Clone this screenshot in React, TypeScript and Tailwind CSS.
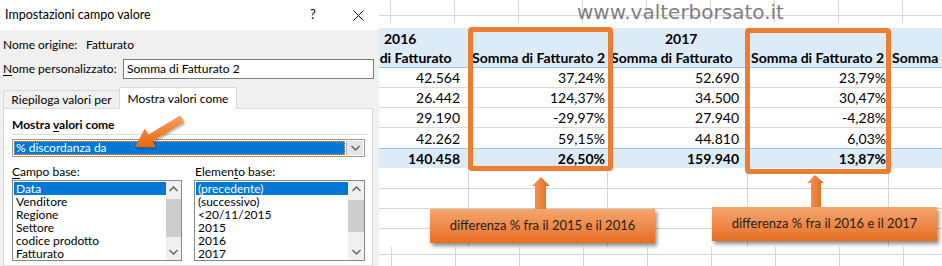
import React from "react";

const dlg = "font-['Lato',sans-serif]";
const xl = "font-['Lato',sans-serif]";

function Chev({ up }: { up?: boolean }) {
  return (
    <svg width="9" height="6" viewBox="0 0 9 6">
      <polyline
        points={up ? "0.5,5 4.5,1 8.5,5" : "0.5,1 4.5,5 8.5,1"}
        fill="none"
        stroke="#606060"
        strokeWidth="1.4"
      />
    </svg>
  );
}

function Items({ items }: { items: string[] }) {
  return (
    <div className="flex-1 flex flex-col pt-[1px] overflow-hidden">
      {items.map((t, i) => (
        <div
          key={t}
          className={
            i === 0
              ? "h-[13px] leading-[13px] pl-[2px] bg-[#0078d7] text-white whitespace-nowrap"
              : "h-[13px] leading-[13px] pl-[2px] text-black whitespace-nowrap"
          }
        >
          {t}
        </div>
      ))}
    </div>
  );
}

function Dialog() {
  return (
    <div className={`${dlg} w-[379px] shrink-0 h-full flex flex-col bg-[#f0f0f0] text-[12px] text-black`}>
      <div className="h-[30px] bg-white flex items-center pl-[5px]">
        <span className="flex-1 text-[12.5px]">Impostazioni campo valore</span>
        <span className="w-[20px] text-center text-[13px]">?</span>
        <span className="w-[20px] ml-[25px] mr-[11px] flex items-center justify-center">
          <svg width="11" height="11" viewBox="0 0 11 11">
            <line x1="0.5" y1="0.5" x2="10.5" y2="10.5" stroke="#111" strokeWidth="1" />
            <line x1="10.5" y1="0.5" x2="0.5" y2="10.5" stroke="#111" strokeWidth="1" />
          </svg>
        </span>
      </div>
      <div className="flex-1 flex flex-col pl-[3px] overflow-hidden">
        <div className="mt-[5px] h-[20px] flex items-center">
          <span className="w-[83px]">Nome origine:</span>
          <span>Fatturato</span>
        </div>
        <div className="mt-[4px] h-[20px] flex items-center">
          <span className="w-[120px] whitespace-nowrap">
            <span className="underline underline-offset-[2px]">N</span>ome personalizzato:
          </span>
          <div className="w-[251px] h-[20px] border border-[#7a7a7a] bg-white pl-[3px] flex items-center">
            Somma di Fatturato 2
          </div>
        </div>
        <div className="mt-[7px] h-[22px] flex items-end relative z-10">
          <div className="w-[116px] h-[18px] border-t border-l border-[#d9d9d9] flex items-center justify-center whitespace-nowrap">
            Riepiloga valori per
          </div>
          <div className="w-[118px] h-[22px] bg-white border border-b-0 border-[#d9d9d9] mb-[-1px] flex items-center justify-center whitespace-nowrap">
            Mostra valori come
          </div>
        </div>
        <div className="w-[370px] flex-1 bg-white border border-[#d9d9d9] pl-[8px] flex flex-col">
          <div className="mt-[8px] h-[16px] leading-[16px] font-bold">
            Mostra <span className="underline underline-offset-[2px]">v</span>alori come
          </div>
          <div className="mt-[1px] w-[356px] h-[1px] bg-[#dcdcdc]" />
          <div className="mt-[4px] w-[353px] h-[18px] border border-[#9a9a9a] bg-white flex p-[1px]">
            <div className="flex-1 bg-[#0078d7] text-white border border-dotted border-[#e8a060] leading-[12px] pl-[1px]">
              % discordanza da
            </div>
            <div className="w-[17px] ml-[1px] bg-[#e5e5e5] border-l border-[#bcbcbc] flex items-center justify-center">
              <Chev />
            </div>
          </div>
          <div className="mt-[7px] h-[16px] leading-[16px] flex">
            <span className="w-[183px]">
              <span className="underline underline-offset-[2px]">C</span>ampo base:
            </span>
            <span>
              Elemen<span className="underline underline-offset-[2px]">t</span>o base:
            </span>
          </div>
          <div className="flex gap-[12px]">
            <div className="w-[170px] h-[81px] border border-[#828790] bg-white flex pl-[1px]">
              <Items items={["Data", "Venditore", "Regione", "Settore", "codice prodotto", "Fatturato"]} />
              <div className="w-[15px] h-full bg-[#f0f0f0] flex flex-col">
                <div className="h-[16px] flex items-center justify-center"><Chev up /></div>
                <div className="flex-1">
                  <div className="mt-[2px] h-[38px] bg-[#cdcdcd]" />
                </div>
                <div className="h-[16px] flex items-center justify-center"><Chev /></div>
              </div>
            </div>
            <div className="w-[171px] h-[81px] border border-[#828790] bg-white flex pl-[1px]">
              <Items items={["(precedente)", "(successivo)", "<20/11/2015", "2015", "2016", "2017"]} />
              <div className="w-[16px] h-full bg-[#f0f0f0] flex flex-col">
                <div className="h-[16px] flex items-center justify-center"><Chev up /></div>
                <div className="flex-1">
                  <div className="mt-[3px] h-[32px] bg-[#cdcdcd]" />
                </div>
                <div className="h-[16px] flex items-center justify-center"><Chev /></div>
              </div>
            </div>
          </div>
        </div>
      </div>
    </div>
  );
}

const colW = ["w-[142px]", "w-[139px]", "w-[140px]", "w-[141px]", "w-[141px]"];

function GridStrip({ hLineClass, first }: { hLineClass: string; first: string }) {
  const cells = [0, 1, 2, 3, 4, 5, 6, 7];
  return (
    <div className="flex w-max h-full">
      <div className={`${first} h-full`}>
        <div className={hLineClass} />
      </div>
      {cells.map((c) => (
        <div key={c} className="w-[64px] h-full border-l border-[#d4d4d4]">
          <div className={hLineClass} />
        </div>
      ))}
      <div className="w-[60px] h-full border-l border-[#d4d4d4]">
        <div className={hLineClass} />
      </div>
    </div>
  );
}

function Sheet() {
  const rows = [
    ["42.564", "37,24%", "52.690", "23,79%"],
    ["26.442", "124,37%", "34.500", "30,47%"],
    ["29.190", "-29,97%", "27.940", "-4,28%"],
    ["42.262", "59,15%", "44.810", "6,03%"],
  ];
  const total = ["140.458", "26,50%", "159.940", "13,87%"];
  const hdr2 = ["Somma di Fatturato", "Somma di Fatturato 2", "Somma di Fatturato", "Somma di Fatturato 2", "Somma di Fatturato"];
  const cellR = (i: number) => (i % 2 === 0 ? "pr-[9px]" : "pr-[3px]");
  return (
    <div className={`${xl} flex-1 h-full flex flex-col overflow-hidden bg-white text-black text-[14px]`}>
      <div className="h-[28px] shrink-0">
        <div className="h-[23px]">
          <GridStrip first="w-[11px]" hLineClass="h-[16px] border-b border-[#d4d4d4]" />
        </div>
      </div>
      <div className="overflow-hidden shrink-0">
        <div className="ml-[-52px] w-max flex flex-col">
          <div className="h-[20px] flex bg-[#ddebf7] font-bold">
            {colW.map((w, i) => (
              <div key={i} className={`${w} pl-[57px] flex items-end pb-[1px] leading-[16px]`}>
                {i === 0 ? "2016" : i === 2 ? "2017" : ""}
              </div>
            ))}
          </div>
          <div className="h-[20px] flex bg-[#ddebf7] font-bold border-b border-[#9bc2e6]">
            {colW.map((w, i) => (
              <div key={i} className={`${w} pl-[3px] flex items-end pb-[1px] leading-[16px] whitespace-nowrap overflow-hidden`}>
                {hdr2[i]}
              </div>
            ))}
          </div>
          {rows.map((r, ri) => (
            <div key={ri} className={ri < 3 ? "h-[20px] flex border-b border-[#d9d9d9]" : "h-[20px] flex"}>
              {colW.map((w, i) => (
                <div key={i} className={`${w} ${cellR(i)} flex items-end justify-end pb-[1px] leading-[16px]`}>
                  {r[i] ?? ""}
                </div>
              ))}
            </div>
          ))}
          <div className="h-[20px] flex bg-[#ddebf7] font-bold border-t border-[#9bc2e6]">
            {colW.map((w, i) => (
              <div key={i} className={`${w} ${cellR(i)} flex items-end justify-end pb-[1px] leading-[16px]`}>
                {total[i] ?? ""}
              </div>
            ))}
          </div>
        </div>
      </div>
      <div className="overflow-hidden shrink-0">
        <div className="ml-[-52px] w-max flex flex-col">
          {["h-[21px] border-b", "h-[20px] border-b", "h-[20px] border-b", "h-[18px]"].map((h, ri) => (
            <div key={ri} className={`${h} border-[#d4d4d4] flex`}>
              {colW.map((w, i) => (
                <div key={i} className={i < 4 ? `${w} h-full border-r border-[#d4d4d4]` : `${w} h-full`} />
              ))}
            </div>
          ))}
        </div>
      </div>
      <div className="flex-1">
        <GridStrip first="w-[12px]" hLineClass="h-[8px] border-b border-[#d4d4d4]" />
      </div>
    </div>
  );
}

function Callout({ text, className }: { text: string; className: string }) {
  return (
    <div
      className={`${className} ${xl} absolute w-[225px] h-[34px] flex items-center justify-center text-[13px] text-[#1e1e1e] bg-linear-to-b from-[#f5a66e] to-[#e66d1b] shadow-[2px_3px_4px_rgba(0,0,0,0.45)]`}
    >
      {text}
    </div>
  );
}

export default function App() {
  return (
    <div className="w-[942px] h-[266px] relative flex overflow-hidden bg-white">
      <Dialog />
      <Sheet />

      <div className="absolute left-[577px] top-[1px] font-['DejaVu_Sans',sans-serif] text-[20px] leading-[22px] text-[#7f7f7f] pointer-events-none">
        www.valterborsato.it
      </div>

      <div className="absolute left-[468px] top-[27px] w-[145px] h-[144px] border-[5px] border-[#ed7d31] rounded-[4px]" />
      <div className="absolute left-[745px] top-[28px] w-[146px] h-[146px] border-[5px] border-[#ed7d31] rounded-[4px]" />

      <svg className="absolute left-[530px] top-[175px]" width="22" height="36" viewBox="0 0 22 36">
        <defs>
          <linearGradient id="ua" x1="0" y1="0" x2="1" y2="0">
            <stop offset="0" stopColor="#f39a5a" />
            <stop offset="1" stopColor="#e26a18" />
          </linearGradient>
        </defs>
        <polygon points="11,2 20,11 16,11 16,35 5,35 5,11 2,11" fill="url(#ua)" />
      </svg>
      <svg className="absolute left-[805px] top-[173px]" width="22" height="36" viewBox="0 0 22 36">
        <polygon points="10,2 19,10 16,10 16,35 6,35 6,10 2,10" fill="url(#ua)" />
      </svg>

      <Callout className="left-[430px] top-[209px]" text="differenza % fra il 2015 e il 2016" />
      <Callout className="left-[712px] top-[207px]" text="differenza % fra il 2016 e il 2017" />

      <svg className="absolute left-0 top-0 pointer-events-none" width="379" height="266" viewBox="0 0 379 266">
        <defs>
          <linearGradient id="da" x1="0" y1="0" x2="0" y2="1">
            <stop offset="0" stopColor="#f7a05c" />
            <stop offset="1" stopColor="#e2680f" />
          </linearGradient>
          <filter id="sh" x="-20%" y="-20%" width="140%" height="140%">
            <feDropShadow dx="1" dy="1.5" stdDeviation="1" floodColor="#000" floodOpacity="0.35" />
          </filter>
        </defs>
        <polygon
          points="135,147 156.1,147.2 152.5,141.2 184.2,122.2 180.2,115.4 148.5,134.4 144.9,128.4"
          fill="url(#da)"
          filter="url(#sh)"
        />
      </svg>
    </div>
  );
}
